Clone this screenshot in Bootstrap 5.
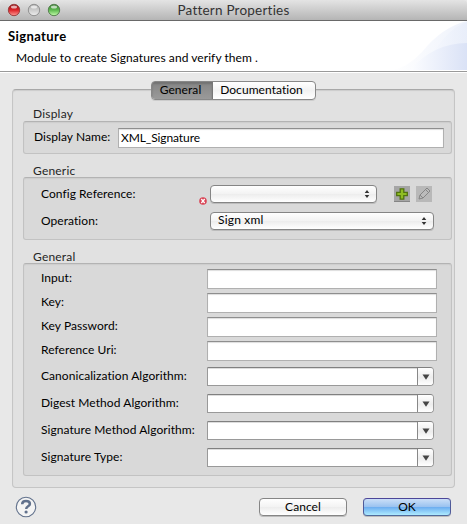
<!DOCTYPE html>
<html lang="en">
<head>
<meta charset="utf-8">
<title>Pattern Properties</title>
<link rel="stylesheet" href="https://cdn.jsdelivr.net/npm/bootstrap@5.3.0/dist/css/bootstrap.min.css">
<style>
body{width:467px;height:524px;overflow:hidden;background:#e8e8e8;font:12px/18px Lato,"Noto Sans",sans-serif;letter-spacing:.06px;color:#000}
.titlebar{height:21px;background:linear-gradient(#e4e4e4,#b5b5b5);border-bottom:1px solid #696969;color:#333;border-radius:4px 4px 0 0;font-size:13.5px;letter-spacing:.22px;line-height:20px}
.lights{left:7px;top:3px}
.banner{height:51px;background:#fff;border-bottom:1px solid #999;box-shadow:0 1px #fff}
.banner-title{font-size:13px;padding:6px 0 0 8px;letter-spacing:.4px}
.banner-text{padding:4px 0 0 16px}
.swoosh{right:0;top:0}
.pane{margin:17px 12px 0;height:399px;background:#e1e1e1;border:1px solid #c5c5c5;border-top:1px solid #a8a8a8;box-shadow:inset 0 1px 1px #ccc;border-radius:4px;padding:0 2px 0 10px}
.tabs{width:165px;height:19px;margin-top:-9px;margin-left:128px;border:1px solid #888;border-radius:4px;background:linear-gradient(#fff,#f2f2f2 50%,#fff);overflow:hidden;line-height:16px;box-shadow:0 1px #ccc}
.tab-on{width:61px;background:linear-gradient(#858585,#9a9a9a);border-right:1px solid #777;box-shadow:inset 0 2px 2px #737373}
.tab-off{padding-right:5px}
.tab-on{padding-right:3px}
.group-name{padding-left:10px;color:#252525;height:18px;line-height:20px;letter-spacing:.2px}
.group-box{background:#d9d9d9;border:1px solid #c2c2c2;border-top-color:#b3b3b3;border-radius:3px;box-shadow:inset 0 1px 1px #ccc}
.field{height:20px;background:#fff;border:1px solid #b0b0b0;border-top-color:#8e8e8e;box-shadow:inset 0 1px 1px #ddd;line-height:17px}
.name-field{width:326px;padding-left:2px;margin-left:10px;letter-spacing:-.1px}
.line{height:24px;padding-left:17px}
.line-tall{height:27px;padding-left:17px}
.lbl{width:166px;white-space:nowrap}
.line .lbl,.combo-line .lbl,.name-lbl{padding-bottom:2px}
.pick,.push{height:18px;border:1px solid #858585;border-radius:4px;background:linear-gradient(#fff,#f3f3f3 48%,#ededed 52%,#fff);box-shadow:0 1px #bcbcbc;line-height:16px}
.pick{padding:0 6px 0 7px}
.pick span{letter-spacing:.2px;padding-bottom:1px}
.combo{width:227px;height:19px;background:#fff;border:1px solid #999;border-top-color:#808080;border-radius:0 4px 4px 0;box-shadow:inset 0 1px #ddd;overflow:hidden}
.drop{width:16px;border-left:1px solid #888;background:linear-gradient(#fff,#ededed 55%,#fff)}
.push{width:88px}
.push-ok{border-color:#4d4699 #4f5a99 #50699a;background:linear-gradient(#cbdff8,#9bc3f0 48%,#6daef0 52%,#aeebff)}
svg{display:block;flex:none}
</style>
<script src="https://cdn.jsdelivr.net/npm/bootstrap@5.3.0/dist/js/bootstrap.bundle.min.js"></script>
</head>
<body>
<svg width="0" height="0" class="position-absolute"><defs>
<linearGradient id="r" x2="0" y2="1"><stop stop-color="#8e1418"/><stop offset=".5" stop-color="#dd2328"/><stop offset="1" stop-color="#ff9c96"/></linearGradient>
<linearGradient id="w" x2="0" y2="1"><stop stop-color="#aaa"/><stop offset="1" stop-color="#eee"/></linearGradient>
<linearGradient id="g" x2="0" y2="1"><stop stop-color="#3d7c38"/><stop offset=".5" stop-color="#5cb94e"/><stop offset="1" stop-color="#c6ffad"/></linearGradient>
<linearGradient id="s1"><stop stop-color="#fff"/><stop offset="1" stop-color="#eef2fb"/></linearGradient>
<linearGradient id="s2"><stop stop-color="#fcfdff"/><stop offset="1" stop-color="#dae2f6"/></linearGradient>
<linearGradient id="s3"><stop stop-color="#f8faff"/><stop offset="1" stop-color="#e6ecf9"/></linearGradient>
<symbol id="updown" viewBox="0 0 6 8"><path d="M.7 3 3 0l2.3 3zM.7 5 3 8l2.3-3z" fill="#333"/></symbol>
<symbol id="down" viewBox="0 0 8 6"><path d="M.5.5h7L4 5.7z" fill="#444"/></symbol>
</defs></svg>

<header class="titlebar position-relative text-center">
  <svg class="lights position-absolute" width="56" height="14"><g stroke-width="1"><circle cx="7" cy="7" r="5.7" fill="url(#r)" stroke="#9b4040"/><circle cx="27" cy="7" r="5.7" fill="url(#w)" stroke="#929292"/><circle cx="47" cy="7" r="5.7" fill="url(#g)" stroke="#568050"/></g><g fill="#fff" opacity=".65"><ellipse cx="7" cy="4" rx="3" ry="1.5"/><ellipse cx="27" cy="4" rx="3" ry="1.5"/><ellipse cx="47" cy="4" rx="3" ry="1.5"/></g></svg>
  <span>Pattern Properties</span>
</header>
<section class="banner position-relative">
  <svg class="swoosh position-absolute" width="75" height="49"><path d="M0 49Q15 47 30 31 50 6 75 0v49z" fill="url(#s1)"/><path d="M32 49Q52 8 75 1v48z" fill="url(#s3)" opacity=".7"/><path d="M18 49Q42 22 75 22v27z" fill="url(#s2)"/></svg>
  <div class="banner-title fw-bold"><span>Signature</span></div>
  <div class="banner-text"><span>Module to create Signatures and verify them .</span></div>
</section>

<main class="pane">
  <div class="tabs d-flex text-center position-relative"><div class="tab-on">General</div><div class="tab-off flex-fill">Documentation</div></div>
  <div class="group-name mt-1"><span>Display</span></div>
  <div class="group-box d-flex align-items-center" style="height:33px;margin-top:-1px"><span class="name-lbl d-block" style="width:84px;padding-left:10px"><span class="text-nowrap">Display Name:</span></span><div class="field name-field"><span>XML_Signature</span></div></div>
  <div class="group-name" style="margin-top:7px"><span>Generic</span></div>
  <div class="group-box" style="height:63px;margin-top:-2px;padding-top:2px">
    <div class="line-tall d-flex align-items-center"><div class="lbl">Config Reference:</div>
      <svg width="8" height="8" style="margin:15px 0 0 -8px" viewBox="0 0 8 8"><circle cx="4" cy="4" r="3.8" fill="#d94455"/><path d="m2.3 2 3.4 4m0-4L2.3 6" stroke="#fff" stroke-width="1.3"/></svg>
      <div class="pick d-flex align-items-center justify-content-end" style="width:167px;margin-left:3px"><svg width="6" height="8"><use href="#updown"/></svg></div>
      <svg style="margin-left:17px" width="16" height="16"><path d="M0 0h16v16H0z" fill="#a5a5a5"/><path d="M0 15.5h16" stroke="#858585"/><path d="M6.2 2.8h3.6v3.5h3.5v3.4H9.8v3.5H6.2V9.7H2.7V6.3h3.5z" fill="#8fbd22" stroke="#50730e" stroke-width="1.3"/></svg>
      <svg style="margin-left:6px" width="16" height="16"><path d="M0 0h16v16H0z" fill="#b8b8b8"/><path d="m3 13 1-4 7-7 3 3-7 7zm1-4 3 3M9.5 3.5l3 3" fill="#bbb" stroke="#858585"/></svg>
    </div>
    <div class="line-tall d-flex align-items-center"><div class="lbl">Operation:</div><div class="pick d-flex align-items-center justify-content-between" style="width:224px;margin-left:3px"><span>Sign xml</span><svg width="6" height="8"><use href="#updown"/></svg></div></div>
  </div>
  <div class="group-name" style="margin-top:7px"><span>General</span></div>
  <div class="group-box" style="height:213px;margin-top:-2px;padding-top:3px">
    <div class="line d-flex align-items-center"><div class="lbl">Input:</div><div class="field" style="width:230px"></div></div>
    <div class="line d-flex align-items-center"><div class="lbl">Key:</div><div class="field" style="width:230px"></div></div>
    <div class="line d-flex align-items-center"><div class="lbl">Key Password:</div><div class="field" style="width:230px"></div></div>
    <div class="line d-flex align-items-center"><div class="lbl">Reference Uri:</div><div class="field" style="width:230px"></div></div>
    <div class="line-tall combo-line d-flex align-items-center"><div class="lbl">Canonicalization Algorithm:</div><div class="combo d-flex justify-content-end"><div class="drop d-flex align-items-center justify-content-center"><svg width="8" height="6"><use href="#down"/></svg></div></div></div>
    <div class="line-tall combo-line d-flex align-items-center"><div class="lbl">Digest Method Algorithm:</div><div class="combo d-flex justify-content-end"><div class="drop d-flex align-items-center justify-content-center"><svg width="8" height="6"><use href="#down"/></svg></div></div></div>
    <div class="line-tall combo-line d-flex align-items-center"><div class="lbl">Signature Method Algorithm:</div><div class="combo d-flex justify-content-end"><div class="drop d-flex align-items-center justify-content-center"><svg width="8" height="6"><use href="#down"/></svg></div></div></div>
    <div class="line-tall combo-line d-flex align-items-center"><div class="lbl">Signature Type:</div><div class="combo d-flex justify-content-end"><div class="drop d-flex align-items-center justify-content-center"><svg width="8" height="6"><use href="#down"/></svg></div></div></div>
  </div>
</main>
<footer class="d-flex align-items-center" style="padding:8px 16px 0 15px">
  <svg width="22" height="22" viewBox="0 0 22 22" fill="none"><circle cx="11" cy="11" r="9.7" fill="#f4f4f4" stroke="#61718c" stroke-width="1.1"/><path d="M7.2 8.2C7.2 5.8 9 5 11 5c2.2 0 3.9 1 3.9 2.9 0 2.4-3.7 2.2-3.7 5" stroke="#61718c" stroke-width="2.5"/><circle cx="11.1" cy="16" r="1.6" fill="#61718c"/></svg>
  <div class="push text-center ms-auto">Cancel</div>
  <div class="push push-ok text-center ms-3">OK</div>
</footer>
</body>
</html>
